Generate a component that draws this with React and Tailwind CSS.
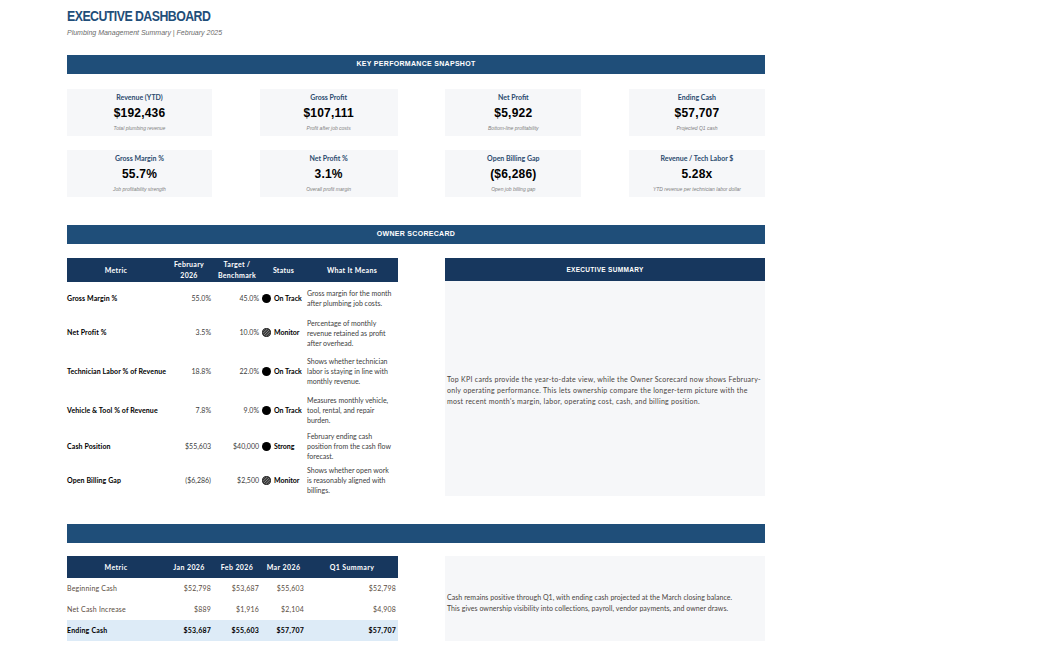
import React from 'react';

const kpis = [
  [
    { label: 'Revenue (YTD)', value: '$192,436', note: 'Total plumbing revenue', w: 'w-[145px]' },
    { label: 'Gross Profit', value: '$107,111', note: 'Profit after job costs', w: 'w-[138px]' },
    { label: 'Net Profit', value: '$5,922', note: 'Bottom-line profitability', w: 'w-[136px]' },
    { label: 'Ending Cash', value: '$57,707', note: 'Projected Q1 cash', w: 'w-[136px]' },
  ],
  [
    { label: 'Gross Margin %', value: '55.7%', note: 'Job profitability strength', w: 'w-[145px]' },
    { label: 'Net Profit %', value: '3.1%', note: 'Overall profit margin', w: 'w-[138px]' },
    { label: 'Open Billing Gap', value: '($6,286)', note: 'Open job billing gap', w: 'w-[136px]' },
    { label: 'Revenue / Tech Labor $', value: '5.28x', note: 'YTD revenue per technician labor dollar', w: 'w-[136px]' },
  ],
];

const score = [
  { m: 'Gross Margin %', v: '55.0%', t: '45.0%', s: 'On Track', dot: 'solid', d: ['Gross margin for the month', 'after plumbing job costs.'], h: 'h-[32px]' },
  { m: 'Net Profit %', v: '3.5%', t: '10.0%', s: 'Monitor', dot: 'hatch', d: ['Percentage of monthly', 'revenue retained as profit', 'after overhead.'], h: 'h-[37px]' },
  { m: 'Technician Labor % of Revenue', v: '18.8%', t: '22.0%', s: 'On Track', dot: 'solid', d: ['Shows whether technician', 'labor is staying in line with', 'monthly revenue.'], h: 'h-[40px]' },
  { m: 'Vehicle & Tool % of Revenue', v: '7.8%', t: '9.0%', s: 'On Track', dot: 'solid', d: ['Measures monthly vehicle,', 'tool, rental, and repair', 'burden.'], h: 'h-[38px]' },
  { m: 'Cash Position', v: '$55,603', t: '$40,000', s: 'Strong', dot: 'solid', d: ['February ending cash', 'position from the cash flow', 'forecast.'], h: 'h-[34px]' },
  { m: 'Open Billing Gap', v: '($6,286)', t: '$2,500', s: 'Monitor', dot: 'hatch', d: ['Shows whether open work', 'is reasonably aligned with', 'billings.'], h: 'h-[34px]' },
];

const cash = [
  { m: 'Beginning Cash', j: '$52,798', f: '$53,687', r: '$55,603', q: '$52,798' },
  { m: 'Net Cash Increase', j: '$889', f: '$1,916', r: '$2,104', q: '$4,908' },
  { m: 'Ending Cash', j: '$53,687', f: '$55,603', r: '$57,707', q: '$57,707', total: true },
];

const cols = 'grid grid-cols-[98px_48px_48px_45px_92px]';

function Banner({ children }) {
  return (
    <div className="h-[19px] w-[698px] bg-[#1f4e79] flex items-center justify-center text-white font-bold text-[7px] tracking-[0.3px] font-['Liberation_Sans',sans-serif]">
      {children}
    </div>
  );
}

function Dot({ kind }) {
  if (kind === 'solid') return <span className="w-[9px] h-[9px] rounded-full bg-black shrink-0" />;
  return (
    <svg width="9" height="9" viewBox="0 0 10 10" className="shrink-0">
      <defs>
        <clipPath id="dc"><circle cx="5" cy="5" r="4.5" /></clipPath>
      </defs>
      <circle cx="5" cy="5" r="4.5" fill="#3a3a3a" />
      <g clipPath="url(#dc)" stroke="#9a9a9a" strokeWidth="0.8">
        <line x1="0" y1="4" x2="6" y2="-2" />
        <line x1="0" y1="7" x2="9" y2="-2" />
        <line x1="0" y1="10" x2="10" y2="0" />
        <line x1="3" y1="10" x2="10" y2="3" />
        <line x1="6" y1="10" x2="10" y2="6" />
      </g>
      <circle cx="5" cy="5" r="4.5" fill="none" stroke="#111" strokeWidth="0.9" />
    </svg>
  );
}

function KpiCard({ k }) {
  return (
    <div className={`${k.w} h-[47px] bg-[#f6f7f9] flex flex-col items-center`}>
      <div className="mt-[3px] leading-[10px] text-[7px] font-bold text-[#2b4a6e] font-['Lato',sans-serif]">{k.label}</div>
      <div className="mt-[3px] leading-[16px] text-[12px] font-bold text-black font-['Liberation_Sans',sans-serif] tracking-[0.2px]">{k.value}</div>
      <div className="mt-[3px] leading-[8px] text-[5px] italic text-[#808080] font-['Liberation_Sans',sans-serif]">{k.note}</div>
    </div>
  );
}

export default function App() {
  return (
    <div className="w-[1049px] h-[664px] bg-white pl-[67px] font-['Lato',sans-serif] overflow-hidden">
      <div className="pt-[9px] leading-[14px] text-[14px] font-bold text-[#1f4e79] font-['Liberation_Sans',sans-serif] tracking-[-0.6px] scale-x-[0.88] origin-left">EXECUTIVE DASHBOARD</div>
      <div className="mt-[5px] leading-[10px] text-[7px] italic text-[#6b6b6b] font-['Liberation_Sans',sans-serif]">Plumbing Management Summary | February 2025</div>

      <div className="mt-[17px]">
        <Banner>KEY PERFORMANCE SNAPSHOT</Banner>
      </div>

      <div className="mt-[15px] flex flex-col gap-[14px] w-[698px]">
        {kpis.map((row, i) => (
          <div key={i} className="flex justify-between">
            {row.map((k) => <KpiCard key={k.label} k={k} />)}
          </div>
        ))}
      </div>

      <div className="mt-[28px]">
        <Banner>OWNER SCORECARD</Banner>
      </div>

      <div className="mt-[14px] flex gap-[47px] w-[698px]">
        <div className="w-[331px]">
          <div className={`${cols} h-[24px] bg-[#17375e] text-white text-[7px] font-bold leading-[11px] text-center items-center tracking-[0.3px]`}>
            <div>Metric</div>
            <div>February<br />2026</div>
            <div>Target /<br />Benchmark</div>
            <div>Status</div>
            <div>What It Means</div>
          </div>
          {score.map((r) => (
            <div key={r.m} className={`${cols} ${r.h} items-center text-[7px]`}>
              <div className="font-bold text-black whitespace-nowrap tracking-[0.1px]">{r.m}</div>
              <div className="text-right pr-[2px] text-[#404040]">{r.v}</div>
              <div className="text-right pr-[2px] text-[#404040]">{r.t}</div>
              <div className="flex items-center gap-[3px] pl-[1px] font-bold text-black whitespace-nowrap">
                <Dot kind={r.dot} />
                <span>{r.s}</span>
              </div>
              <div className="leading-[10px] text-[#404040] whitespace-nowrap pl-[1px]">
                {r.d.map((l) => <div key={l}>{l}</div>)}
              </div>
            </div>
          ))}
        </div>

        <div className="w-[320px] flex flex-col">
          <div className="h-[23px] bg-[#17375e] flex items-center justify-center text-white text-[6.5px] font-bold tracking-[0.3px] font-['Liberation_Sans',sans-serif]">EXECUTIVE SUMMARY</div>
          <div className="h-[215px] bg-[#f6f7f9] flex items-center pl-[2px] pt-[4px]">
            <p className="text-[7px] leading-[11px] text-[#4a4440] whitespace-nowrap tracking-[0.28px]">
              Top KPI cards provide the year-to-date view, while the Owner Scorecard now shows February-<br />
              only operating performance. This lets ownership compare the longer-term picture with the<br />
              most recent month's margin, labor, operating cost, cash, and billing position.
            </p>
          </div>
        </div>
      </div>

      <div className="mt-[27px]">
        <Banner>{'\u00a0'}</Banner>
      </div>

      <div className="mt-[13px] flex gap-[47px] w-[698px]">
        <div className="w-[331px]">
          <div className={`${cols} h-[22px] bg-[#17375e] text-white text-[7px] font-bold text-center items-center tracking-[0.4px]`}>
            <div>Metric</div>
            <div>Jan 2026</div>
            <div>Feb 2026</div>
            <div>Mar 2026</div>
            <div>Q1 Summary</div>
          </div>
          {cash.map((r) => (
            <div key={r.m} className={`${cols} h-[21px] items-center text-[7px] tracking-[0.2px] ${r.total ? 'bg-[#ddebf7] font-bold text-black' : 'text-[#5a4c42]'}`}>
              <div className="whitespace-nowrap">{r.m}</div>
              <div className="text-right pr-[2px]">{r.j}</div>
              <div className="text-right pr-[2px]">{r.f}</div>
              <div className="text-right pr-[2px]">{r.r}</div>
              <div className="text-right pr-[2px]">{r.q}</div>
            </div>
          ))}
        </div>

        <div className="w-[320px] h-[85px] bg-[#f6f7f9] flex items-center pl-[2px] pt-[8px]">
          <p className="text-[7px] leading-[11px] text-[#4a4440] whitespace-nowrap tracking-[0.05px]">
            Cash remains positive through Q1, with ending cash projected at the March closing balance.<br />
            This gives ownership visibility into collections, payroll, vendor payments, and owner draws.
          </p>
        </div>
      </div>
    </div>
  );
}
